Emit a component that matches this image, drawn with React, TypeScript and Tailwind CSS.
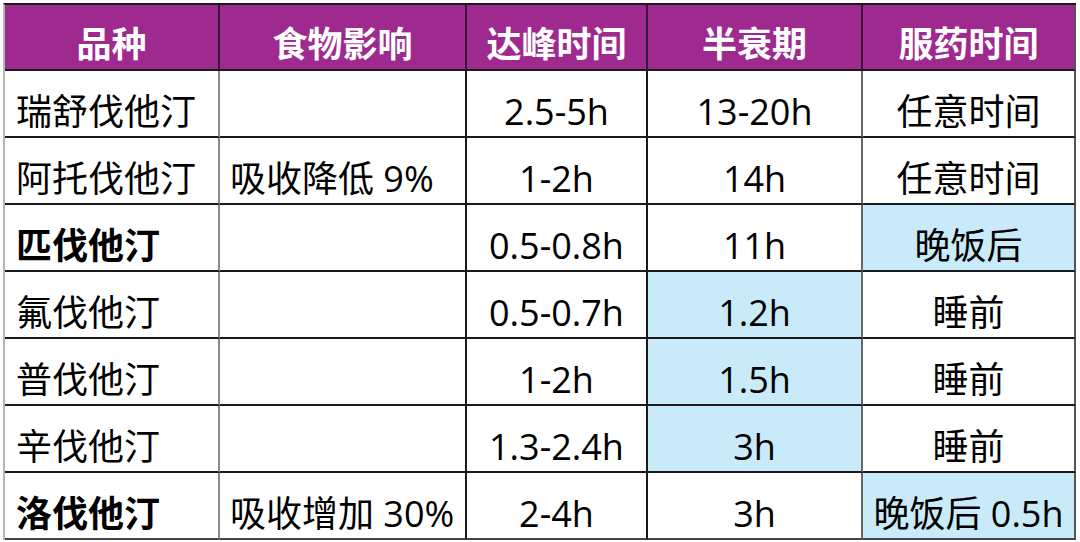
type Row = {
  name: string;
  bold?: boolean;
  food: string;
  peak: string;
  half: string;
  halfBlue?: boolean;
  dose: string;
  doseBlue?: boolean;
};

const rows: Row[] = [
  { name: '瑞舒伐他汀', food: '', peak: '2.5-5h', half: '13-20h', dose: '任意时间' },
  { name: '阿托伐他汀', food: '吸收降低 9%', peak: '1-2h', half: '14h', dose: '任意时间' },
  { name: '匹伐他汀', bold: true, food: '', peak: '0.5-0.8h', half: '11h', dose: '晚饭后', doseBlue: true },
  { name: '氟伐他汀', food: '', peak: '0.5-0.7h', half: '1.2h', halfBlue: true, dose: '睡前' },
  { name: '普伐他汀', food: '', peak: '1-2h', half: '1.5h', halfBlue: true, dose: '睡前' },
  { name: '辛伐他汀', food: '', peak: '1.3-2.4h', half: '3h', halfBlue: true, dose: '睡前' },
  { name: '洛伐他汀', bold: true, food: '吸收增加 30%', peak: '2-4h', half: '3h', dose: '晚饭后 0.5h', doseBlue: true },
];

const headers = ['品种', '食物影响', '达峰时间', '半衰期', '服药时间'];

export default function App() {
  return (
    <div
      className="w-[1080px] h-[542px] bg-white pt-[3px] pl-[3px]"
      style={{ fontFamily: '"Open Sans", "Noto Sans CJK SC", sans-serif' }}
    >
      <div className="w-[1073px] border-t-2 border-l-2 border-t-[#1a1a1a] border-l-[#b5b5b5] grid grid-cols-[215px_247px_181px_215px_213px]">
        {/* HEADER */}
        {headers.map((h, i) => (
          <div
            key={h}
            className={`h-[66px] bg-[#9e2a8f] text-white font-bold text-[35px] flex items-center justify-center pt-[14px] border-b-2 border-b-[#1a1a1a] ${
              i === 4 ? 'border-r-2 border-r-[#555]' : 'border-r-2 border-r-[#3b1536]'
            }`}
          >
            {h}
          </div>
        ))}

        {/* BODY */}
        {rows.map((r, idx) => {
          const last = idx === rows.length - 1;
          const bb = last ? 'border-b-2 border-b-[#444]' : 'border-b-2 border-b-[#1a1a1a]';
          return (
            <div key={r.name} className="contents">
              <div
                className={`h-[67px] flex items-center pl-[11px] pt-[16px] text-[36px] text-black border-r-2 border-r-[#8a8a8a] ${bb} ${
                  r.bold ? 'font-bold' : ''
                }`}
              >
                {r.name}
              </div>
              <div
                className={`h-[67px] flex items-center pl-[10px] pt-[16px] text-[36px] text-black border-r-2 border-r-[#1a1a1a] ${bb}`}
              >
                {r.food}
              </div>
              <div
                className={`h-[67px] flex items-center justify-center pt-[16px] text-[36px] text-black border-r-2 border-r-[#1a1a1a] ${bb}`}
              >
                {r.peak}
              </div>
              <div
                className={`h-[67px] flex items-center justify-center pt-[16px] text-[36px] text-black border-r-2 border-r-[#666] ${bb} ${
                  r.halfBlue ? 'bg-[#c9eaf9]' : ''
                }`}
              >
                {r.half}
              </div>
              <div
                className={`h-[67px] flex items-center justify-center pt-[16px] text-[36px] text-black border-r-2 border-r-[#555] whitespace-nowrap ${bb} ${
                  r.doseBlue ? 'bg-[#c9eaf9]' : ''
                }`}
              >
                {r.dose}
              </div>
            </div>
          );
        })}
      </div>
    </div>
  );
}
